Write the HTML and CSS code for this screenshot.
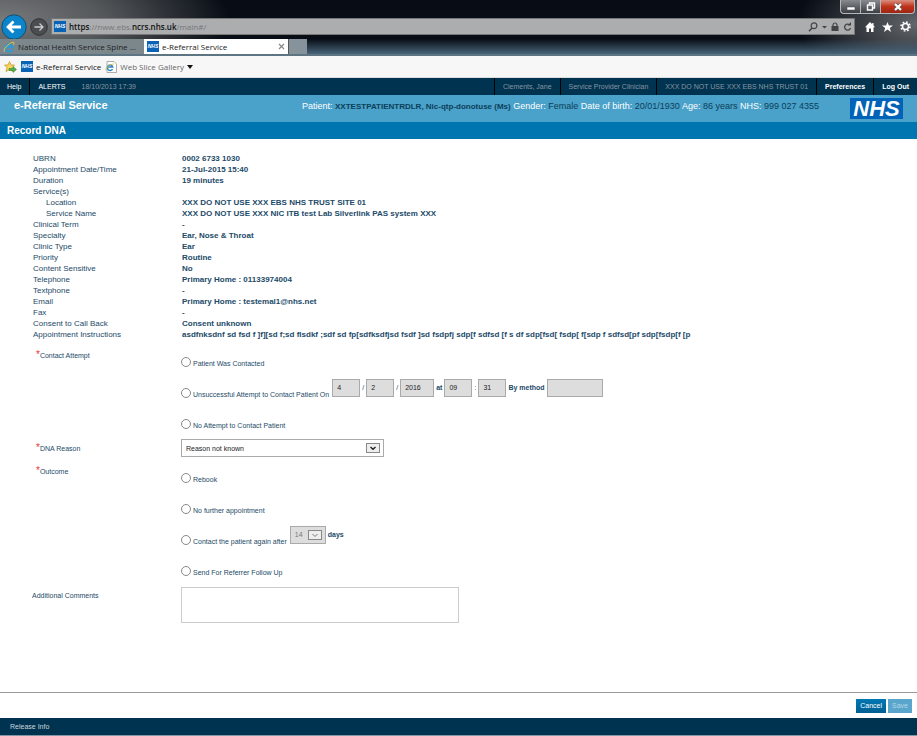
FILE: index.html
```html
<!DOCTYPE html>
<html lang="en">
<head>
    <meta charset="UTF-8">
    <meta name="viewport" content="width=device-width, initial-scale=1.0">
    <title>e-Referral Service</title>
    <link rel="stylesheet" href="styles.css">
</head>
<body>
<div class="browser">
    <div class="window-buttons">
        <button class="win-btn" aria-label="Minimise">
            <svg width="10" height="8" viewBox="0 0 10 8"><rect x="1" y="4" width="8" height="3" fill="#fff" stroke="#444" stroke-width=".5"/></svg>
        </button>
        <button class="win-btn" aria-label="Restore">
            <svg width="10" height="9" viewBox="0 0 10 9"><path d="M3.5 2V1H8.5V6H7M1.5 3H6.5V8H1.5Z" fill="none" stroke="#fff" stroke-width="1.4"/></svg>
        </button>
        <button class="win-btn win-close" aria-label="Close">
            <svg width="10" height="8" viewBox="0 0 10 8"><path d="M2 1L8 7M8 1L2 7" stroke="#555" stroke-width="3.2"/><path d="M2 1L8 7M8 1L2 7" stroke="#fff" stroke-width="2.2"/></svg>
        </button>
    </div>
    <div class="address-row">
        <button class="nav-back" aria-label="Back">
            <svg width="26" height="26" viewBox="0 0 26 26"><circle cx="13" cy="13" r="12.2" fill="#0b84cb" stroke="#14506f" stroke-width="1"/><path d="M20 13H7M12.5 7.5L7 13L12.5 18.5" fill="none" stroke="#fff" stroke-width="2.8"/></svg>
        </button>
        <button class="nav-forward" aria-label="Forward">
            <svg width="18" height="18" viewBox="0 0 18 18"><circle cx="9" cy="9" r="8.3" fill="#4b4d50" stroke="#303235" stroke-width="1"/><path d="M4.500 9H13M9.500 5.500L13 9L9.500 12.500" fill="none" stroke="#ccc" stroke-width="1.300"/></svg>
        </button>
        <div class="address-bar">
            <span class="favicon">NHS</span>
            <span class="url"><b>https</b>://nww.ebs.<b>ncrs.nhs.uk</b>/main#/</span>
            <div class="address-icons">
                <svg width="10" height="10" viewBox="0 0 10 10"><circle cx="6" cy="3.800" r="2.900" fill="none" stroke="#444" stroke-width="1.200"/><path d="M4 6L1 9.200" stroke="#444" stroke-width="1.500"/></svg>
                <svg width="5" height="10" viewBox="0 0 5 10"><path d="M0 4H5L2.500 6.500Z" fill="#444"/></svg>
                <svg width="8" height="10" viewBox="0 0 8 10"><rect x=".5" y="4" width="7" height="5" fill="#444"/><path d="M2 4.500V3A2 2 0 0 1 6 3V4.500" fill="none" stroke="#444" stroke-width="1.200"/></svg>
                <svg width="9" height="10" viewBox="0 0 9 10"><path d="M6.500 2.800A3 3 0 1 0 7.500 6" fill="none" stroke="#444" stroke-width="1.300"/><path d="M4.500 3.500H8V0Z" fill="#444"/></svg>
            </div>
        </div>
        <div class="tool-icons">
            <svg width="10" height="10" viewBox="0 0 10 10"><path d="M5 0L0 5.200H1.500V10H4V6.500H6V10H8.500V5.200H10L8.500 3.600V1H7.200V2.300Z" fill="#fff"/></svg>
            <svg width="11" height="10" viewBox="0 0 11 10"><path d="M5.500 0L6.900 3.500H11L7.800 6L9 10L5.500 7.600L2 10L3.200 6L0 3.500H4.100Z" fill="#fff"/></svg>
            <svg width="11" height="11" viewBox="0 0 11 11"><circle cx="5.500" cy="5.500" r="3" fill="none" stroke="#fff" stroke-width="1.500"/><circle cx="5.500" cy="5.500" r="4.500" fill="none" stroke="#fff" stroke-width="1.600" stroke-dasharray="1.700 1.834"/></svg>
        </div>
    </div>
    <div class="tabs">
        <div class="tab">
            <svg width="12" height="12" viewBox="0 0 12 12"><path d="M9.500 8.300A3.700 3.700 0 1 1 9.700 6.300H3" fill="none" stroke="#2b9ad8" stroke-width="1.900"/><path d="M1.500 10.800C-1 9.500 6 1.500 10.200 1.200C12 1.400 10.800 3 10.300 4" fill="none" stroke="#e7c23c" stroke-width="1"/></svg>
            <span class="tab-title">National Health Service Spine ...</span>
        </div>
        <div class="tab active">
            <span class="favicon">NHS</span>
            <span class="tab-title">e-Referral Service</span>
            <button class="tab-close" aria-label="Close tab">
                <svg width="7" height="7" viewBox="0 0 7 7"><path d="M1 1L6 6M6 1L1 6" stroke="#888" stroke-width="1.200"/></svg>
            </button>
        </div>
        <button class="tab-new" aria-label="New tab"></button>
    </div>
    <div class="favourites">
        <svg width="13" height="12" viewBox="0 0 13 12"><path d="M5.500 .5L7 4H10.500L8 6.500L9 10.500L5.500 8.500L2 10.500L3 6.500L.5 4H4Z" fill="#f6d75c" stroke="#c9992c" stroke-width=".8"/><path d="M5 7.500H9V5.500L12.500 8.500L9 11.500V9.500H5Z" fill="#4fb248" stroke="#2f7f30" stroke-width=".5"/></svg>
        <a href="#" class="fav-link dark"><span class="favicon">NHS</span>e-Referral Service</a>
        <a href="#" class="fav-link">
            <svg width="12" height="12" viewBox="0 0 12 12"><path d="M2 .5H9L11.500 3V11.500H2Z" fill="#fff" stroke="#999" stroke-width=".8"/><path d="M7.500 8A2.700 2.700 0 1 1 7.700 6H3" fill="none" stroke="#2b86c8" stroke-width="1.500"/><path d="M1 9.500C0 7 5 3 9 3" fill="none" stroke="#e7c23c" stroke-width=".9"/></svg>
            Web Slice Gallery
            <svg width="6" height="5" viewBox="0 0 6 5"><path d="M0 1H6L3 5Z" fill="#111"/></svg>
        </a>
    </div>
</div>

<nav class="top-bar">
    <a href="#" class="help">Help</a>
    <a href="#" class="alerts">ALERTS</a>
    <span class="muted">18/10/2013 17:39</span>
    <div class="user-info">
        <span class="cell muted">Clements, Jane</span>
        <span class="cell muted">Service Provider Clinician</span>
        <span class="cell muted">XXX DO NOT USE XXX EBS NHS TRUST 01</span>
        <a href="#" class="cell strong">Preferences</a>
        <a href="#" class="cell strong">Log Out</a>
    </div>
</nav>

<header>
    <h1>e-Referral Service</h1>
    <div class="patient">
        <span>Patient:</span> <b>XXTESTPATIENTRDLR, Nic-qtp-donotuse (Ms)</b>
        <span>Gender:</span> Female
        <span>Date of birth:</span> 20/01/1930
        <span>Age:</span> 86 years
        <span>NHS:</span> 999 027 4355
    </div>
    <div class="nhs-logo">NHS</div>
</header>
<h2>Record DNA</h2>

<main>
    <dl class="details">
        <dt>UBRN</dt><dd>0002 6733 1030</dd>
        <dt>Appointment Date/Time</dt><dd>21-Jul-2015 15:40</dd>
        <dt>Duration</dt><dd>19 minutes</dd>
        <dt>Service(s)</dt><dd></dd>
        <dt class="sub">Location</dt><dd>XXX DO NOT USE XXX EBS NHS TRUST SITE 01</dd>
        <dt class="sub">Service Name</dt><dd>XXX DO NOT USE XXX NIC ITB test Lab Silverlink PAS system XXX</dd>
        <dt>Clinical Term</dt><dd>-</dd>
        <dt>Specialty</dt><dd>Ear, Nose &amp; Throat</dd>
        <dt>Clinic Type</dt><dd>Ear</dd>
        <dt>Priority</dt><dd>Routine</dd>
        <dt>Content Sensitive</dt><dd>No</dd>
        <dt>Telephone</dt><dd>Primary Home : 01133974004</dd>
        <dt>Textphone</dt><dd>-</dd>
        <dt>Email</dt><dd>Primary Home : testemal1@nhs.net</dd>
        <dt>Fax</dt><dd>-</dd>
        <dt>Consent to Call Back</dt><dd>Consent unknown</dd>
        <dt>Appointment Instructions</dt><dd>asdfnksdnf sd fsd f ]f][sd f;sd flsdkf ;sdf sd fp[sdfksdfjsd fsdf ]sd fsdpfj sdp[f sdfsd [f s df sdp[fsd[ fsdp[ f[sdp f sdfsd[pf sdp[fsdp[f [p</dd>
    </dl>

    <form id="dna-form" class="dna-form">
        <div class="field" role="radiogroup" aria-labelledby="contact-label">
            <div class="field-label required" id="contact-label">Contact Attempt</div>
            <div class="options">
                <div class="option">
                    <input type="radio" name="contact" id="contacted">
                    <label for="contacted">Patient Was Contacted</label>
                </div>
                <div class="option">
                    <input type="radio" name="contact" id="unsuccessful">
                    <label for="unsuccessful">Unsuccessful Attempt to Contact Patient On</label>
                    <div class="inline-fields">
                        <input type="text" class="box" value="4" aria-label="Day" disabled>
                        <span class="sep">/</span>
                        <input type="text" class="box" value="2" aria-label="Month" disabled>
                        <span class="sep">/</span>
                        <input type="text" class="box year" value="2016" aria-label="Year" disabled>
                        <b>at</b>
                        <input type="text" class="box" value="09" aria-label="Hour" disabled>
                        <span class="sep">:</span>
                        <input type="text" class="box" value="31" aria-label="Minute" disabled>
                        <label class="method" for="method">By method</label>
                        <input type="text" class="box wide" id="method" disabled>
                    </div>
                </div>
                <div class="option">
                    <input type="radio" name="contact" id="no-attempt">
                    <label for="no-attempt">No Attempt to Contact Patient</label>
                </div>
            </div>
        </div>

        <div class="field reason">
            <label class="field-label required" for="reason">DNA Reason</label>
            <div class="select-wrap">
                <select id="reason">
                    <option>Reason not known</option>
                </select>
                <svg class="arrow" width="14" height="10" viewBox="0 0 14 10"><rect x=".5" y=".5" width="13" height="9" fill="#eee" stroke="#888"/><path d="M4.500 4L7 6.200L9.500 4" fill="none" stroke="#222" stroke-width="1.500"/></svg>
            </div>
        </div>

        <div class="field" role="radiogroup" aria-labelledby="outcome-label">
            <div class="field-label required" id="outcome-label">Outcome</div>
            <div class="options">
                <div class="option">
                    <input type="radio" name="outcome" id="rebook">
                    <label for="rebook">Rebook</label>
                </div>
                <div class="option">
                    <input type="radio" name="outcome" id="no-further">
                    <label for="no-further">No further appointment</label>
                </div>
                <div class="option">
                    <input type="radio" name="outcome" id="contact-again">
                    <label for="contact-again">Contact the patient again after</label>
                    <div class="inline-fields">
                        <div class="select-wrap days">
                            <select aria-label="Number of days" disabled>
                                <option>14</option>
                            </select>
                            <svg class="arrow" width="14" height="10" viewBox="0 0 14 10"><rect x=".5" y=".5" width="13" height="9" fill="#eee" stroke="#888"/><path d="M4.500 4L7 6.500L9.500 4" fill="none" stroke="#777"/></svg>
                        </div>
                        <b>days</b>
                    </div>
                </div>
                <div class="option">
                    <input type="radio" name="outcome" id="follow-up">
                    <label for="follow-up">Send For Referrer Follow Up</label>
                </div>
            </div>
        </div>

        <div class="field comments">
            <label class="field-label" for="comments">Additional Comments</label>
            <textarea id="comments"></textarea>
        </div>
    </form>
</main>

<div class="actions">
    <button type="button" class="btn">Cancel</button>
    <button type="submit" form="dna-form" class="btn" disabled>Save</button>
</div>
<footer><a href="#">Release Info</a></footer>
</body>
</html>
```
FILE: styles.css
```css
* {
    box-sizing: border-box;
}

body {
    margin: 0;
    min-height: 100vh;
    display: flex;
    flex-direction: column;
    background: #fff;
    color: #1c4a68;
    font-family: "Liberation Sans", Arial, sans-serif;
    font-size: 8px;
    line-height: 11px;
}

a {
    color: inherit;
    text-decoration: none;
}

button {
    padding: 0;
    border: 0;
    background: none;
    font: inherit;
    cursor: pointer;
}

svg {
    display: block;
    flex: none;
}

/* browser window */
.browser {
    background: radial-gradient(ellipse 230px 80px at 0 20px, #77797b 0, #55585b 45%, transparent 100%),
        radial-gradient(ellipse 120px 60px at 100% 24px, #63676b 0, transparent 100%),
        #080d15;
    font-family: "Open Sans", sans-serif;
}

.window-buttons {
    display: flex;
    justify-content: flex-end;
    height: 14px;
    padding-right: 2px;
}

.win-btn {
    display: flex;
    justify-content: center;
    align-items: center;
    width: 20px;
    height: 14px;
    border: 1px solid #b5b8bb;
    border-top: 0;
    border-right: 0;
    background: linear-gradient(#878b90, #3b3e43);
}

.win-btn:first-child {
    border-radius: 0 0 0 4px;
}

.win-close {
    width: 35px;
    border-right: 1px solid #b5b8bb;
    border-radius: 0 0 4px 0;
    background: linear-gradient(#d98f80, #c0321a 50%, #9c2612);
}

.address-row {
    display: flex;
    align-items: center;
    height: 25px;
    padding: 0 6px 0 1px;
}

.nav-forward {
    margin: 0 3px;
}

.address-bar {
    flex: 1;
    display: flex;
    align-items: center;
    height: 17px;
    padding: 0 2px;
    border: 1px solid #777;
    background: #abadaf;
}

.favicon {
    flex: none;
    width: 12px;
    height: 11px;
    background: #0a62b5;
    color: #fff;
    font: italic bold 5px/11px "Liberation Sans", Arial, sans-serif;
    text-align: center;
}

.url {
    margin-left: 3px;
    color: #777;
    font-size: 8px;
}

.url b {
    color: #111;
    font-weight: 600;
}

.address-icons {
    display: flex;
    align-items: center;
    gap: 4px;
    margin-left: auto;
}

.tool-icons {
    display: flex;
    align-items: center;
    gap: 7px;
    margin-left: 10px;
}

.tabs {
    display: flex;
    height: 17px;
    border-bottom: 2px solid #5d7482;
    background: linear-gradient(transparent, #48647a);
}

.tab {
    display: flex;
    align-items: center;
    gap: 3px;
    width: 144px;
    padding: 0 3px;
    background: #7c878c;
    color: #222;
    font-size: 8px;
    white-space: nowrap;
}

.tab.active {
    background: #fff;
}

.tab-close {
    margin-left: auto;
}

.tab-new {
    width: 19px;
    border-left: 1px solid #555;
    background: #86939a;
}

.favourites {
    display: flex;
    align-items: center;
    gap: 4px;
    height: 22px;
    padding: 0 4px;
    border-bottom: 1px solid #ddd;
    background: #f7f7f7;
}

.fav-link {
    display: flex;
    align-items: center;
    gap: 3px;
    color: #666;
}

.fav-link.dark {
    color: #111;
}

/* application bars */
.top-bar {
    display: flex;
    align-items: center;
    height: 17px;
    background: #003350;
    color: #fff;
    font-size: 7px;
    line-height: 17px;
    white-space: nowrap;
}

.help {
    padding: 0 8px 0 7px;
    border-right: 1px solid #000;
}

.alerts {
    padding: 0 16px 0 8px;
}

.muted {
    color: #8696a1;
}

.user-info {
    display: flex;
    margin-left: auto;
}

.cell {
    padding: 0 8px;
    border-left: 1px solid #000;
}

.strong {
    font-weight: bold;
}

header {
    display: flex;
    height: 27px;
    padding: 0 14px;
    background: #4aa1c9;
    white-space: nowrap;
}

h1 {
    margin: 0;
    color: #fff;
    font-size: 11px;
    line-height: 20px;
}

.patient {
    margin: 0 31px 0 auto;
    color: #0b4059;
    font-size: 9px;
    line-height: 23px;
}

.patient b {
    font-size: 8px;
}

.patient span {
    color: #fff;
}

.nhs-logo {
    width: 53px;
    height: 21px;
    margin-top: 3px;
    background: #0063b8;
    color: #fff;
    font: italic bold 22px/21px "Liberation Sans", Arial, sans-serif;
    text-align: center;
}

h2 {
    margin: 0;
    padding: 0 7px;
    background: #0076b0;
    color: #fff;
    font-size: 10px;
    line-height: 17px;
}

/* page content */
main {
    flex: 1;
    padding: 14px 32px 0;
}

.details {
    display: grid;
    grid-template-columns: 149px 1fr;
    grid-auto-rows: 11px;
    margin: 0;
    padding-left: 1px;
}

.details dd {
    margin: 0;
    font-weight: bold;
}

.details .sub {
    padding-left: 13px;
}

.dna-form {
    padding-top: 6px;
    font-size: 7px;
}

.field {
    display: grid;
    grid-template-columns: 149px 1fr;
    justify-items: start;
}

.field-label {
    padding-top: 4px;
}

.required::before {
    content: "*";
    padding-left: 4px;
    color: #e33;
    font-size: 10px;
    line-height: 8px;
}

.option {
    display: flex;
    align-items: center;
    height: 31px;
}

.option > label {
    padding-top: 4px;
}

.option input[type="radio"] {
    appearance: none;
    width: 10px;
    height: 10px;
    margin: 0 2px 0 0;
    border: 1px solid #888;
    border-radius: 50%;
    background: #fff;
}

.option input[type="radio"]:checked {
    background: #1c4a68;
    box-shadow: inset 0 0 0 2px #fff;
}

.inline-fields {
    display: flex;
    align-items: center;
    gap: 2px;
    margin: 0 0 10px 3px;
}

.box,
select {
    height: 18px;
    padding: 0 4px;
    border: 1px solid #aaa;
    border-radius: 0;
    background: #fff;
    color: #222;
    font: 7px "Liberation Sans", Arial, sans-serif;
}

.box {
    width: 28px;
    background: #ddd;
}

.box.year {
    width: 34px;
}

.box.wide {
    width: 56px;
}

.sep {
    width: 2px;
}

.method {
    font-weight: bold;
}

.reason,
.comments {
    align-items: start;
}

.reason {
    padding-bottom: 5px;
}

.select-wrap {
    position: relative;
    width: 203px;
}

.select-wrap select {
    appearance: none;
    width: 100%;
}

.select-wrap .arrow {
    position: absolute;
    top: 4px;
    right: 4px;
    pointer-events: none;
}

.select-wrap.days {
    width: 36px;
}

.days select {
    background: #ddd;
    color: #777;
    opacity: 1;
}

textarea {
    width: 278px;
    height: 36px;
    margin-top: 1px;
    border: 1px solid #ccc;
    font: inherit;
    resize: none;
}

/* bottom of the page */
.actions {
    display: flex;
    justify-content: flex-end;
    gap: 2px;
    padding: 6px 5px 5px;
    border-top: 1px solid #999;
}

.btn {
    padding: 0 4px;
    background: linear-gradient(#0078b4, #005f93);
    color: #fff;
    font-size: 7px;
    line-height: 14px;
}

.btn:disabled {
    background: #5aa5cb;
    color: #b5d7e8;
}

footer {
    padding: 0 10px;
    border-bottom: 1px solid #8296a3;
    background: #003350;
    color: #ccd6dc;
    font-size: 7px;
    line-height: 17px;
}
```
